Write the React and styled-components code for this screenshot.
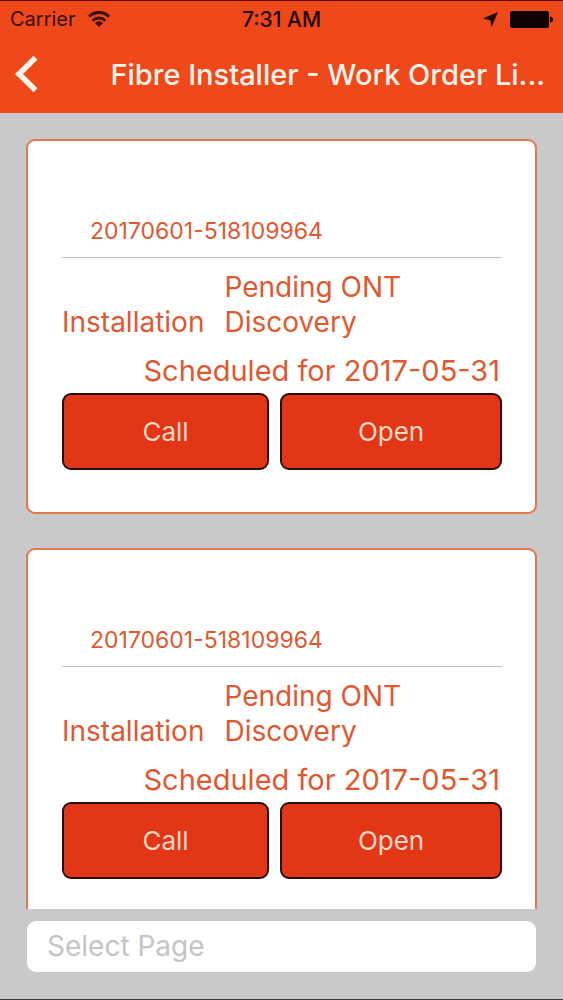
import React from 'react'
import styled, { createGlobalStyle } from 'styled-components';

const GlobalStyle = createGlobalStyle`
    * {
        box-sizing: border-box;
    }
    body {
        margin: 0;
        font-family: Inter, "Liberation Sans", sans-serif;
    }
`

const Screen = styled.div`
    display: flex;
    flex-direction: column;
    height: 100vh;
    background-color: #c9c8ca;
    border-top: 1px solid #5c0a05;
    border-bottom: 1px solid #3a393c;
`

const Header = styled.header`
    background-color: #ef491b;
`

const StatusBar = styled.div`
    display: grid;
    grid-template-columns: 1fr auto 1fr;
    align-items: center;
    height: 36px;
    padding: 0 10px;
    font-size: 20px;
    color: #3b0d04;
`

const StatusGroup = styled.div`
    display: flex;
    align-items: center;
    justify-content: ${props => props.$end ? "flex-end" : "flex-start"};
    gap: 12px;
`

const Time = styled.span`
    font-size: 21px;
    font-weight: 500;
    color: #200602;
`

const NavBar = styled.div`
    display: flex;
    align-items: center;
    justify-content: space-between;
    height: 76px;
    padding: 0 18px 2px 14px;
`

const BackButton = styled.button`
    display: flex;
    padding: 0;
    border: none;
    background-color: transparent;
    cursor: pointer;
`

const Title = styled.h1`
    margin: 0;
    font-size: 29px;
    font-weight: 500;
    white-space: nowrap;
    color: #fff3ea;
`

const List = styled.main`
    display: flex;
    flex-direction: column;
    flex: 1;
    gap: 34px;
    min-height: 0;
    padding: 26px 26px 0;
    overflow: hidden;
`

const Card = styled.article`
    flex-shrink: 0;
    padding: 74px 33px 42px 34px;
    background-color: white;
    border: 2px solid #e37748;
    border-radius: 9px;
    color: #e0582f;
`

const OrderNumber = styled.div`
    padding: 0 28px 10px;
    font-size: 23px;
    line-height: 32px;
    border-bottom: 1px solid #bfc3c3;
`

const Details = styled.div`
    display: flex;
    align-items: flex-end;
    gap: 20px;
    padding-top: 12px;
    font-size: 28px;
    line-height: 35px;
`

const Status = styled.span`
    flex: 1;
    max-width: 200px;
`

const Schedule = styled.div`
    padding: 13px 2px 5px 0;
    font-size: 29px;
    line-height: 35px;
    text-align: right;
    white-space: nowrap;
`

const Actions = styled.div`
    display: grid;
    grid-template-columns: 14fr 15fr;
    gap: 11px;
`

const Button = styled.button`
    height: 77px;
    padding: 0;
    font-family: inherit;
    font-size: 26px;
    color: #ffd9c4;
    background-color: #e23717;
    border: 2px solid #2a0c08;
    border-radius: 9px;
    cursor: pointer;
`

const Footer = styled.footer`
    padding: 12px 27px 27px;
`

const PageInput = styled.input`
    display: block;
    width: 100%;
    height: 51px;
    padding: 0 20px 2px;
    font-family: inherit;
    font-size: 28px;
    background-color: white;
    border: none;
    border-radius: 9px;

    &::placeholder {
        color: #c5c3c7;
        opacity: 1;
    }
`

const orders = [
    { id: 1, number: "20170601-518109964", type: "Installation", status: "Pending ONT Discovery", date: "2017-05-31" },
    { id: 2, number: "20170601-518109964", type: "Installation", status: "Pending ONT Discovery", date: "2017-05-31" },
]

function WifiIcon() {
    return (
        <svg width="22" height="16" viewBox="0 0 22 16" fill="none" stroke="#3b0d04" strokeWidth="3">
            <path d="M1 5.6C6.6.2 15.4.2 21 5.6" />
            <path d="M4.6 9.8C8.2 6.2 13.8 6.2 17.4 9.8" />
            <path d="M11 16 7 12C9.2 9.800 12.800 9.800 15 12Z" fill="#3b0d04" stroke="none" />
        </svg>
    )
}

function LocationIcon() {
    return (
        <svg width="15" height="15" viewBox="0 0 15 15" fill="#200602">
            <path d="M15 0 8.6 15 7.4 8.6 0 6.6Z" />
        </svg>
    )
}

function BatteryIcon() {
    return (
        <svg width="43" height="17" viewBox="0 0 43 17" fill="#0d0200">
            <rect width="39" height="17" rx="2.5" />
            <path d="M40 5.5c2 .3 3 1.5 3 3s-1 2.7-3 3Z" />
        </svg>
    )
}

function WorkOrder({ order }) {
    return (
        <Card>
            <OrderNumber>{order.number}</OrderNumber>
            <Details>
                <span>{order.type}</span>
                <Status>{order.status}</Status>
            </Details>
            <Schedule>Scheduled for {order.date}</Schedule>
            <Actions>
                <Button type="button">Call</Button>
                <Button type="button">Open</Button>
            </Actions>
        </Card>
    )
}

export default function App() {
    return (
        <Screen>
            <GlobalStyle />
            <Header>
                <StatusBar>
                    <StatusGroup>
                        <span>Carrier</span>
                        <WifiIcon />
                    </StatusGroup>
                    <Time>7:31 AM</Time>
                    <StatusGroup $end>
                        <LocationIcon />
                        <BatteryIcon />
                    </StatusGroup>
                </StatusBar>
                <NavBar>
                    <BackButton type="button" aria-label="Back">
                        <svg width="24" height="38" viewBox="0 0 24 38" fill="none" stroke="#fff3ea" strokeWidth="5.6">
                            <path d="M21.5 2.8 5 19 21.5 35.2" />
                        </svg>
                    </BackButton>
                    <Title>Fibre Installer - Work Order Li...</Title>
                </NavBar>
            </Header>
            <List>
                {orders.map(order => <WorkOrder key={order.id} order={order} />)}
            </List>
            <Footer>
                <PageInput type="text" aria-label="Select Page" placeholder="Select Page" />
            </Footer>
        </Screen>
    )
}
